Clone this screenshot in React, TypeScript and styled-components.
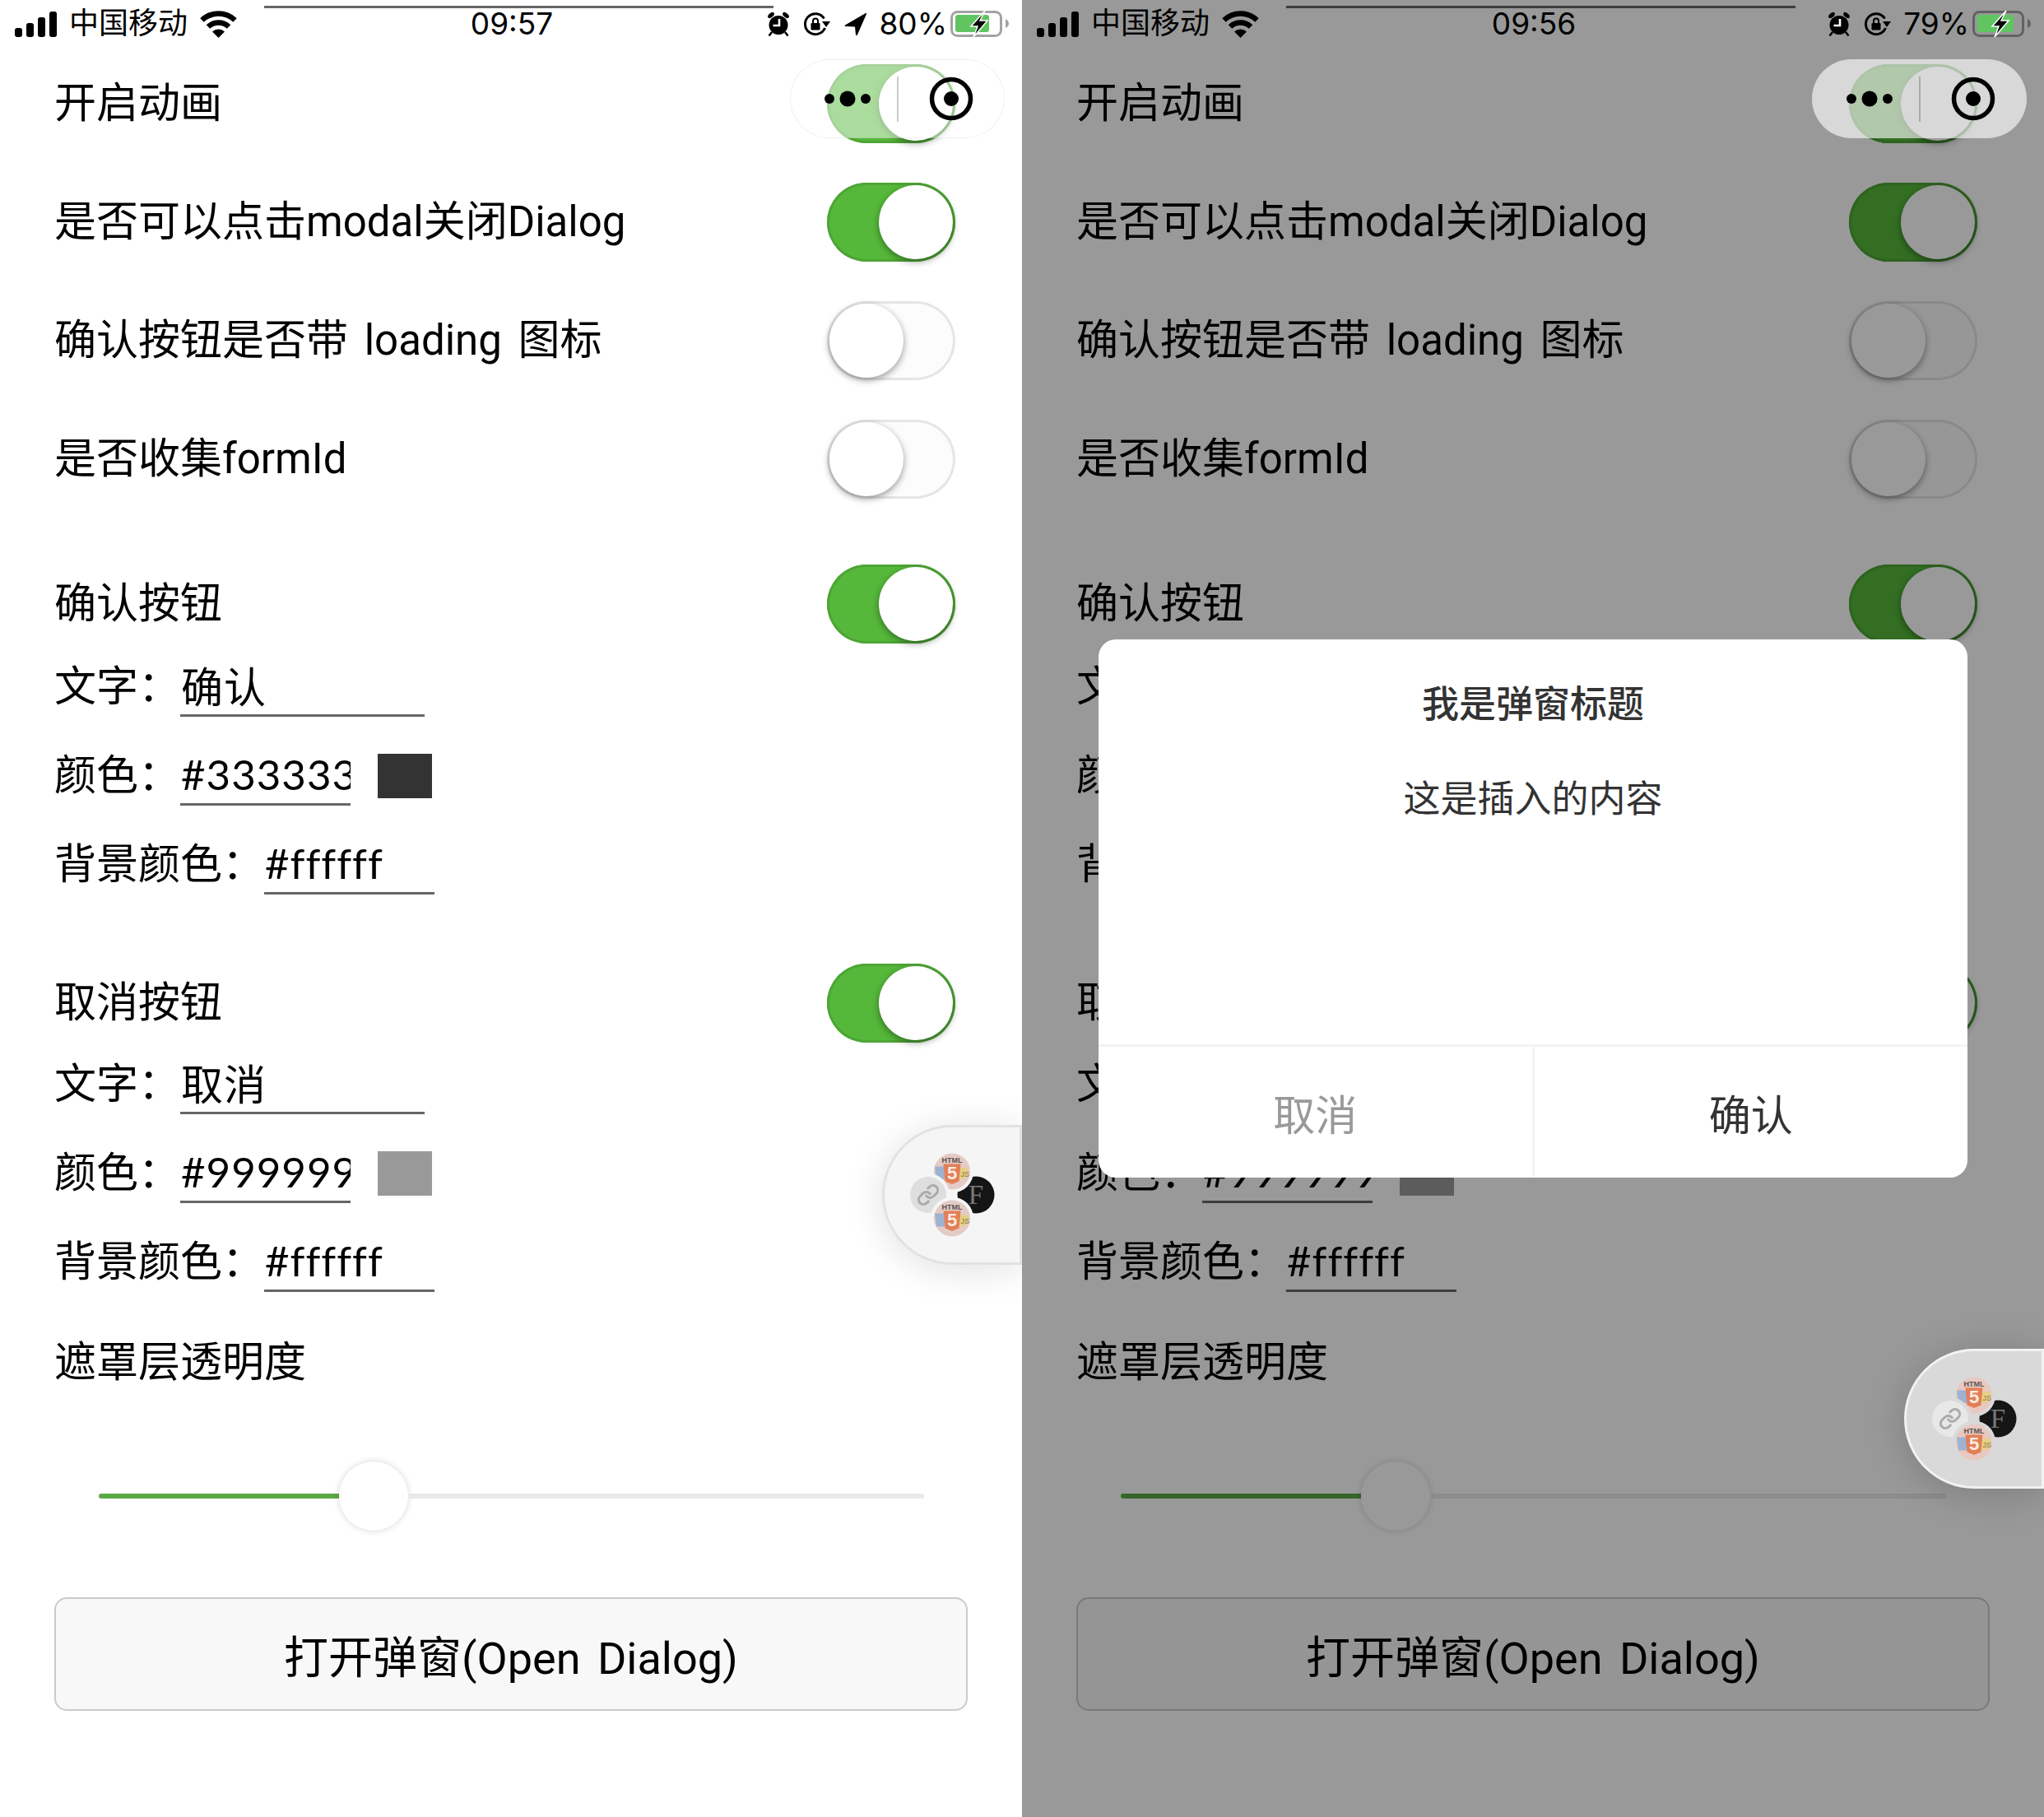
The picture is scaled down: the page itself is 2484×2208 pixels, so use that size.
import React from "react";
import styled, { createGlobalStyle } from "styled-components";
import { Link } from "lucide-react";

const GlobalStyle = createGlobalStyle`
  html, body {
    margin: 0;
    padding: 0;
    background: #fff;
  }
  * {
    box-sizing: border-box;
  }
  body {
    font-family: Roboto, "Noto Sans CJK SC", sans-serif;
    word-spacing: 7px;
  }
`;

const Page = styled.div`
  display: flex;
  width: 2484px;
  height: 2208px;
`;

const Phone = styled.div`
  position: relative;
  width: 1242px;
  height: 2208px;
  overflow: hidden;
  background: #fff;
  color: #000;
`;

/* status bar */
const StatusBar = styled.div`
  position: relative;
  z-index: 2;
  display: grid;
  grid-template-columns: 1fr auto 1fr;
  align-items: center;
  height: 58px;
  margin-bottom: 20px;
  padding: 0 16px 0 18px;
  color: #000;
`;

const TopLine = styled.div`
  position: absolute;
  top: 7px;
  left: 321px;
  width: 619px;
  height: 3px;
  background: rgba(0, 0, 0, 0.6);
`;

const StatusLeft = styled.div`
  display: flex;
  align-items: center;
  gap: 15px;
`;

const Carrier = styled.span`
  font-size: 36px;
  line-height: 40px;
`;

const Time = styled.span`
  font-family: Inter, "Liberation Sans", sans-serif;
  font-size: 37px;
  line-height: 40px;
`;

const StatusRight = styled.div`
  display: flex;
  align-items: center;
  justify-content: flex-end;
  gap: 17px;
`;

const Percent = styled.span`
  font-family: Inter, "Liberation Sans", sans-serif;
  font-size: 37px;
  line-height: 40px;
  margin: 0 -13px 0 -2px;
`;

/* wechat capsule */
const Capsule = styled.div<{ $dim?: boolean }>`
  position: absolute;
  z-index: 3;
  top: 72px;
  left: 960px;
  display: flex;
  align-items: center;
  width: 261px;
  height: 96px;
  border-radius: 48px;
  background: rgba(255, 255, 255, ${({ $dim }) => ($dim ? 0.62 : 0.5)});
  border: 1.5px solid ${({ $dim }) => ($dim ? "transparent" : "rgba(0, 0, 0, 0.06)")};
`;

const CapsuleCell = styled.div<{ $shift?: number }>`
  display: flex;
  flex: none;
  align-items: center;
  justify-content: center;
  width: 129px;
  padding-left: ${({ $shift }) => $shift || 0}px;
`;

const CapsuleDivider = styled.div`
  flex: none;
  width: 1.5px;
  height: 55px;
  background: rgba(0, 0, 0, 0.2);
`;

/* form */
const Content = styled.div`
  padding: 0 66px;
`;

const SwitchRow = styled.div<{ $gap?: number }>`
  display: flex;
  align-items: center;
  justify-content: space-between;
  height: 96px;
  margin-top: ${({ $gap }) => $gap || 0}px;
  padding-right: 15px;
`;

const Label = styled.span`
  font-size: 51px;
  line-height: 72px;
  white-space: pre;
`;

const SwitchTrack = styled.div<{ $on?: boolean }>`
  display: flex;
  justify-content: ${({ $on }) => ($on ? "flex-end" : "flex-start")};
  width: 156px;
  height: 96px;
  padding: 3px;
  border-radius: 48px;
  background: ${({ $on }) => ($on ? "#55b83a" : "#fcfcfc")};
  box-shadow: inset 0 0 0 3px ${({ $on }) => ($on ? "#4ea536" : "#e5e5e5")};
`;

const SwitchKnob = styled.div`
  width: 90px;
  height: 90px;
  border-radius: 50%;
  background: #fff;
  box-shadow: 0 3px 9px rgba(0, 0, 0, 0.4);
`;

const FieldRow = styled.div<{ $gap?: number }>`
  display: flex;
  align-items: center;
  height: 72px;
  margin-top: ${({ $gap }) => $gap || 36}px;
`;

const FieldInput = styled.input<{ $width: number }>`
  width: ${({ $width }) => $width}px;
  height: 72px;
  padding: 0 0 3px 1px;
  border: 0;
  border-bottom: 3px solid #666;
  border-radius: 0;
  outline: none;
  background: transparent;
  color: #000;
  font-family: Lato, "Noto Sans CJK SC", sans-serif;
  font-size: 51px;
  letter-spacing: 1px;
`;

const Swatch = styled.div<{ $color: string }>`
  width: 66px;
  height: 54px;
  margin-left: 33px;
  background: ${({ $color }) => $color};
`;

const SliderRow = styled.div`
  display: flex;
  align-items: center;
  height: 84px;
  margin-top: 84px;
  padding: 0 53px 0 54px;
`;

const SliderFill = styled.div`
  width: 292px;
  height: 6px;
  border-radius: 3px 0 0 3px;
  background: #5aa945;
`;

const SliderKnob = styled.div`
  width: 84px;
  height: 84px;
  border-radius: 50%;
  background: #fff;
  box-shadow: 0 0 9px rgba(0, 0, 0, 0.16);
`;

const SliderRest = styled.div`
  flex: 1;
  height: 6px;
  border-radius: 0 3px 3px 0;
  background: #e9e9e9;
`;

const OpenButton = styled.div`
  display: flex;
  align-items: center;
  justify-content: center;
  height: 138px;
  margin-top: 81px;
  border: 2px solid #cacaca;
  border-radius: 15px;
  background: #f8f8f8;
  font-size: 54px;
`;

/* floating ball */
const Ball = styled.div<{ $top: number; $dim?: boolean }>`
  position: absolute;
  z-index: 3;
  top: ${({ $top }) => $top}px;
  right: 0;
  width: 170px;
  height: 170px;
  border: 3px solid ${({ $dim }) => ($dim ? "#f2f2f2" : "#e2e2e2")};
  border-radius: 85px 0 0 85px;
  background: ${({ $dim }) => ($dim ? "#d9d9d9" : "#f5f5f5")};
  box-shadow: 0 6px 48px rgba(0, 0, 0, ${({ $dim }) => ($dim ? 0.18 : 0.12)});
`;

/* dialog */
const Mask = styled.div`
  position: absolute;
  z-index: 1;
  inset: 0;
  display: flex;
  align-items: center;
  justify-content: center;
  background: rgba(0, 0, 0, 0.4);
`;

const Dialog = styled.div`
  display: flex;
  flex-direction: column;
  width: 1056px;
  height: 654px;
  border-radius: 21px;
  overflow: hidden;
  background: #fff;
  color: #333;
`;

const DialogBody = styled.div`
  flex: 1;
  padding-top: 48px;
  text-align: center;
`;

const DialogTitle = styled.div`
  font-size: 45px;
  font-weight: 500;
  line-height: 64px;
`;

const DialogText = styled.div`
  margin-top: 51px;
  font-size: 45px;
  line-height: 64px;
`;

const DialogFooter = styled.div`
  display: flex;
  height: 162px;
  border-top: 3px solid #f3f3f3;
`;

const DialogAction = styled.div<{ $color: string }>`
  display: flex;
  flex: 1;
  align-items: center;
  justify-content: center;
  color: ${({ $color }) => $color};
  font-size: 51px;
  & + & {
    border-left: 3px solid #f3f3f3;
  }
`;

function SignalIcon() {
  return (
    <svg width="51" height="31" viewBox="0 0 51 31">
      <rect x="0" y="20" width="9" height="11" rx="3" />
      <rect x="14" y="14" width="9" height="17" rx="3" />
      <rect x="28" y="7" width="9" height="24" rx="3" />
      <rect x="42" y="0" width="9" height="31" rx="3" />
    </svg>
  );
}

function WifiIcon() {
  return (
    <svg width="45" height="33" viewBox="0 0 45 33">
      <path d="M2.5 11.5 A29 29 0 0 1 42.5 11.5" fill="none" stroke="#000" strokeWidth="6.5" />
      <path d="M10 19.5 A18 18 0 0 1 35 19.5" fill="none" stroke="#000" strokeWidth="6.5" />
      <path d="M22.5 33 L15 25.5 A11 11 0 0 1 30 25.5 Z" />
    </svg>
  );
}

function AlarmIcon() {
  return (
    <svg width="28" height="31" viewBox="0 0 28 31">
      <circle cx="14" cy="16.5" r="11.5" />
      <ellipse cx="5" cy="4.5" rx="4.5" ry="2.5" transform="rotate(-40 5 4.5)" />
      <ellipse cx="23" cy="4.5" rx="4.5" ry="2.5" transform="rotate(40 23 4.5)" />
      <path d="M6 25 L2.5 29.5 M22 25 L25.5 29.5" stroke="#000" strokeWidth="2.5" />
      <path d="M15 9 V17 H7.5" fill="none" stroke="#fff" strokeWidth="2.6" />
    </svg>
  );
}

function RotationLockIcon() {
  return (
    <svg width="32" height="29" viewBox="0 0 32 29">
      <path d="M25.5 19 A12.5 12.5 0 1 1 24.5 7.5" fill="none" stroke="#000" strokeWidth="3" />
      <polygon points="22,11 32,11 27,18" />
      <rect x="8.5" y="13" width="11" height="8.5" rx="1.2" />
      <path d="M11 13 V10.5 a3 3 0 0 1 6 0 V13" fill="none" stroke="#000" strokeWidth="2" />
    </svg>
  );
}

function LocationIcon() {
  return (
    <svg width="27" height="29" viewBox="0 0 27 29">
      <path d="M26 1 L1 15.5 Q0 17 2 17 L13 17.5 L14 27.5 Q15 29 16 27 L27 2 Q27 0 26 1 Z" />
    </svg>
  );
}

function BatteryIcon({ fill, bolt }: { fill: number; bolt: number }) {
  return (
    <svg width="71" height="34" viewBox="0 0 71 34">
      <rect x="1.5" y="2.5" width="60" height="29" rx="7" fill="none" stroke="rgba(0,0,0,0.36)" strokeWidth="3" />
      <rect x="6" y="6" width={fill} height="21" rx="3" fill="#60c560" />
      <path d="M67 11 Q71 13 71 17 Q71 20 67 22 Z" fill="rgba(0,0,0,0.36)" />
      <polygon
        points={`${bolt + 8},1 ${bolt - 9},20 ${bolt - 1},20 ${bolt - 6},33 ${bolt + 11},13 ${bolt + 2},13`}
        stroke="#fff"
        strokeWidth="1.5"
      />
    </svg>
  );
}

function DotsIcon() {
  return (
    <svg width="56" height="20" viewBox="0 0 56 20">
      <circle cx="6" cy="10" r="6" />
      <circle cx="28" cy="10" r="9.5" />
      <circle cx="50" cy="10" r="6" />
    </svg>
  );
}

function RecordIcon() {
  return (
    <svg width="54" height="54" viewBox="0 0 54 54">
      <circle cx="27" cy="27" r="23.5" fill="none" stroke="#000" strokeWidth="5.5" />
      <circle cx="27" cy="27" r="9" />
    </svg>
  );
}

function HtmlDisc({ cy, ring, tint }: { cy: number; ring: string; tint: string }) {
  return (
    <g transform={`translate(82 ${cy})`}>
      <circle r="26" fill={ring} />
      <circle r="22" fill={tint} />
      <path d="M-21 -6 H-9 V10 H-19 Z" fill="#9eb2d2" />
      <path d="M9 -4 H20 Q20 6 15 9 H9 Z" fill="#e6d083" />
      <text x="10.5" y="6" fontSize="9" fill="#8a7a4a" fontFamily="Liberation Sans">JS</text>
      <text x="0" y="-11" fontSize="9" fontWeight="700" textAnchor="middle" fill="#5c5252" fontFamily="Liberation Sans">
        HTML
      </text>
      <path d="M-10.5 -9 H10.5 L8.5 12 L0 15.5 L-8.5 12 Z" fill="#e27f56" />
      <text x="0" y="9.5" fontSize="22" fontWeight="700" textAnchor="middle" fill="#fbe9e0" fontFamily="Liberation Sans">
        5
      </text>
    </g>
  );
}

function BallCluster({ dim }: { dim?: boolean }) {
  const ring = dim ? "#d9d9d9" : "#f5f5f5";
  const tint = dim ? "#e9c8c0" : "#e4cbc5";
  return (
    <svg width="164" height="164" viewBox="0 0 164 164">
      <circle cx="111" cy="82" r="22.5" fill="#151515" />
      <text x="111" y="93" fontSize="33" textAnchor="middle" fill="#777" fontFamily="Liberation Serif">F</text>
      <HtmlDisc cy={53.5} ring={ring} tint={tint} />
      <circle cx="53" cy="82" r="26" fill={ring} />
      <circle cx="53" cy="82" r="22" fill={dim ? "#e8e8e8" : "#dedede"} />
      <Link x={39} y={68} width={28} height={28} color="#aaa" strokeWidth={2.6} />
      <HtmlDisc cy={110.5} ring={ring} tint={tint} />
    </svg>
  );
}

function Switch({ on }: { on?: boolean }) {
  return (
    <SwitchTrack $on={on}>
      <SwitchKnob />
    </SwitchTrack>
  );
}

function ButtonFields({ text, color, gap }: { text: string; color: string; gap: number }) {
  return (
    <>
      <FieldRow $gap={gap}>
        <Label>文字：</Label>
        <FieldInput $width={297} readOnly value={text} />
      </FieldRow>
      <FieldRow>
        <Label>颜色：</Label>
        <FieldInput $width={207} readOnly value={color} />
        <Swatch $color={color} />
      </FieldRow>
      <FieldRow>
        <Label>背景颜色：</Label>
        <FieldInput $width={207} readOnly value="#ffffff" />
      </FieldRow>
    </>
  );
}

type ScreenProps = {
  time: string;
  percent: string;
  batteryFill: number;
  bolt: number;
  ballTop: number;
  open?: boolean;
};

function Screen({ time, percent, batteryFill, bolt, ballTop, open }: ScreenProps) {
  return (
    <Phone>
      <StatusBar>
        <TopLine />
        <StatusLeft>
          <SignalIcon />
          <Carrier>中国移动</Carrier>
          <WifiIcon />
        </StatusLeft>
        <Time>{time}</Time>
        <StatusRight>
          <AlarmIcon />
          <RotationLockIcon />
          {!open && <LocationIcon />}
          <Percent>{percent}</Percent>
          <BatteryIcon fill={batteryFill} bolt={bolt} />
        </StatusRight>
      </StatusBar>

      <Capsule $dim={open}>
        <CapsuleCell $shift={8}>
          <DotsIcon />
        </CapsuleCell>
        <CapsuleDivider />
        <CapsuleCell>
          <RecordIcon />
        </CapsuleCell>
      </Capsule>

      <Content>
        <SwitchRow>
          <Label>开启动画</Label>
          <Switch on />
        </SwitchRow>
        <SwitchRow $gap={48}>
          <Label>是否可以点击modal关闭Dialog</Label>
          <Switch on />
        </SwitchRow>
        <SwitchRow $gap={48}>
          <Label>确认按钮是否带 loading 图标</Label>
          <Switch />
        </SwitchRow>
        <SwitchRow $gap={48}>
          <Label>是否收集formId</Label>
          <Switch />
        </SwitchRow>

        <SwitchRow $gap={80}>
          <Label>确认按钮</Label>
          <Switch on />
        </SwitchRow>
        <ButtonFields text="确认" color="#333333" gap={17} />

        <SwitchRow $gap={84}>
          <Label>取消按钮</Label>
          <Switch on />
        </SwitchRow>
        <ButtonFields text="取消" color="#999999" gap={15} />

        <FieldRow $gap={50}>
          <Label>遮罩层透明度</Label>
        </FieldRow>
        <SliderRow>
          <SliderFill />
          <SliderKnob />
          <SliderRest />
        </SliderRow>

        <OpenButton>打开弹窗(Open Dialog)</OpenButton>
      </Content>

      <Ball $top={ballTop} $dim={open}>
        <BallCluster dim={open} />
      </Ball>

      {open && (
        <Mask>
          <Dialog>
            <DialogBody>
              <DialogTitle>我是弹窗标题</DialogTitle>
              <DialogText>这是插入的内容</DialogText>
            </DialogBody>
            <DialogFooter>
              <DialogAction $color="#999">取消</DialogAction>
              <DialogAction $color="#333">确认</DialogAction>
            </DialogFooter>
          </Dialog>
        </Mask>
      )}
    </Phone>
  );
}

export default function App() {
  return (
    <>
      <GlobalStyle />
      <Page>
        <Screen time="09:57" percent="80%" batteryFill={41} bolt={34} ballTop={1367} />
        <Screen time="09:56" percent="79%" batteryFill={44} bolt={33} ballTop={1639} open />
      </Page>
    </>
  );
}
